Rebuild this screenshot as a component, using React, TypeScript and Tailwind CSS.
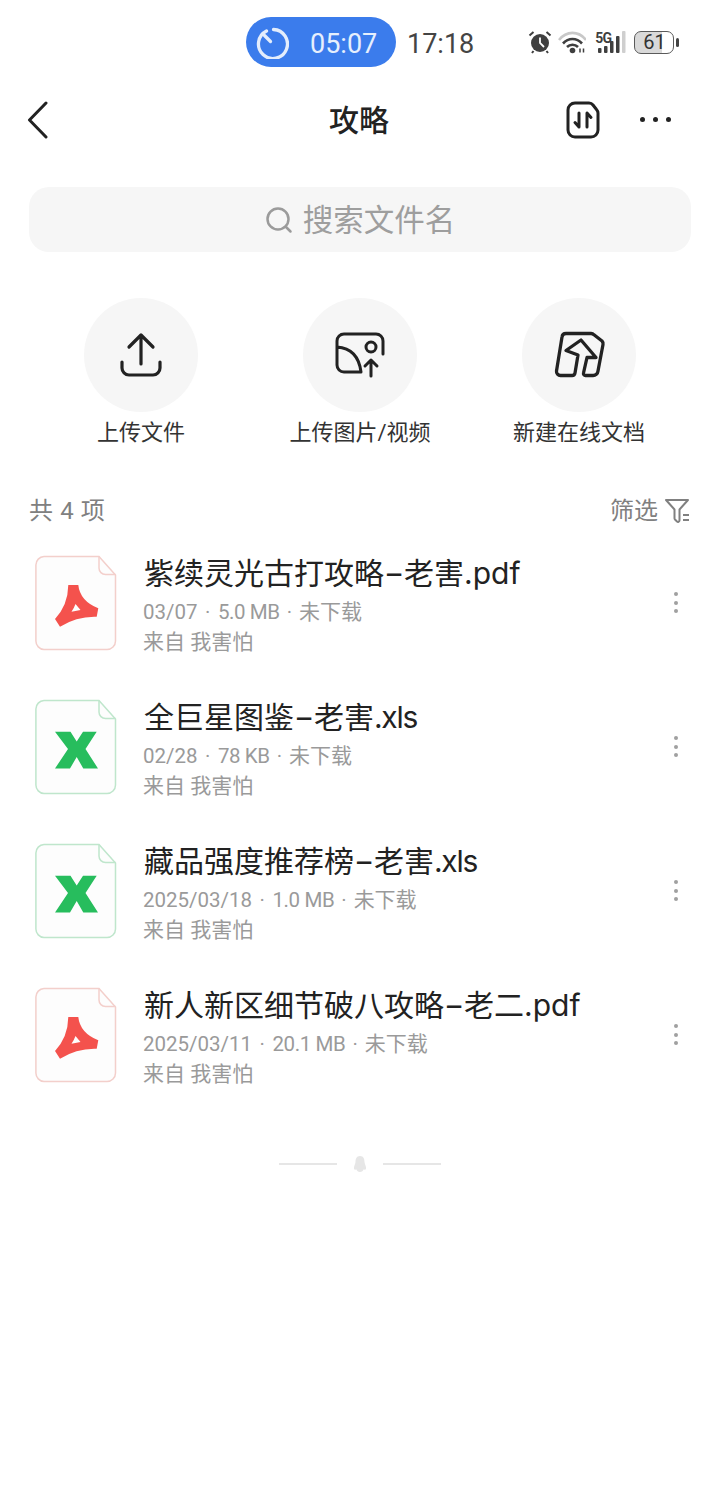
const files = [
  { stem: '紫续灵光古打攻略', author: '老害', ext: '.pdf', meta: ['03/07', '5.0 MB', '未下载'], type: 'pdf' },
  { stem: '全巨星图鉴', author: '老害', ext: '.xls', meta: ['02/28', '78 KB', '未下载'], type: 'xls' },
  { stem: '藏品强度推荐榜', author: '老害', ext: '.xls', meta: ['2025/03/18', '1.0 MB', '未下载'], type: 'xls' },
  { stem: '新人新区细节破八攻略', author: '老二', ext: '.pdf', meta: ['2025/03/11', '20.1 MB', '未下载'], type: 'pdf' },
];

function FileIcon({ type }: { type: string }) {
  const pdf = type === 'pdf';
  const edge = pdf ? '#f3cfcb' : '#bfe6cc';
  return (
    <svg width="82" height="96" viewBox="0 0 82 96" fill="none" className="shrink-0">
      <path d="M9 1.500H64L80.500 20V86A8.500 8.500 0 0 1 72 94.500H9A8.500 8.500 0 0 1 .9 86V10A8.500 8.500 0 0 1 9 1.500Z" fill="#fdfdfd" stroke={edge} strokeWidth="1.500" />
      <path d="M64 1.500V13A6.500 6.500 0 0 0 70.500 19.500H80.500" stroke={edge} strokeWidth="1.500" />
      {pdf ? (
        <path
          fillRule="evenodd"
          fill="#f4524d"
          d="M33.300 30H43.300Q45 46 63.300 53.300L61.700 61.700Q42 61 25 71.700L20 64Q33 50 33.300 30ZM40.500 49L45.500 55 36.500 56.800Q39 53 40.500 49Z"
        />
      ) : (
        <path
          fill="#27bd5d"
          d="M20 32.700H35.500L41.700 42.500 48 32.700H61.700L50.500 50 63 69.500H48.300L41.700 58 35 69.500H20L33 50Z"
        />
      )}
    </svg>
  );
}

function StatusIcons() {
  return (
    <div className="flex items-center ml-[54px] h-[50px]">
      {/* alarm */}
      <svg width="24" height="24" viewBox="0 0 24 24" fill="none">
        <circle cx="12" cy="13" r="9" fill="#3f3f3f" />
        <path d="M12 7.500V13L16 17" stroke="#fff" strokeWidth="1.800" />
        <path d="M1.500 5.500L5.500 2M22.500 5.500L18.500 2M5.500 21L4 23M18.500 21L20 23" stroke="#3f3f3f" strokeWidth="2" />
      </svg>
      {/* wifi */}
      <svg width="28" height="24" viewBox="0 0 28 24" fill="none" className="ml-[6px]">
        <path d="M1 10C8.500 .5 20.500 .5 28 10" stroke="#c8c8c8" strokeWidth="2.600" />
        <path d="M5 13.500C10.500 7.500 18.500 7.500 24 13.500" stroke="#3f3f3f" strokeWidth="2.600" />
        <path d="M9 17C12 14 17 14 20 17" stroke="#3f3f3f" strokeWidth="2.600" />
        <circle cx="14.500" cy="20.500" r="2.800" fill="#3f3f3f" />
        <path d="M22 18.500V22.500M25.500 18.500V22.500" stroke="#3f3f3f" strokeWidth="1.500" />
      </svg>
      {/* 5G + signal */}
      <div className="relative w-[33px] h-[24px] ml-[8px]">
        <span className="absolute left-[1px] top-[1px] text-[14px] leading-[14px] font-bold text-[#3f3f3f] tracking-[-0.8px]">5G</span>
        <svg width="33" height="24" viewBox="0 0 33 24" fill="none" className="absolute left-0 top-0">
          <rect x="4" y="18" width="3.500" height="5" rx="1" fill="#3f3f3f" />
          <rect x="10" y="16" width="3.500" height="7" rx="1" fill="#3f3f3f" />
          <rect x="16" y="11" width="3.500" height="12" rx="1" fill="#3f3f3f" />
          <rect x="22" y="6" width="3.500" height="17" rx="1" fill="#3f3f3f" />
          <rect x="28" y="1" width="3.500" height="22" rx="1" fill="#cfcfcf" />
        </svg>
      </div>
      {/* battery */}
      <div className="ml-[7px] w-[40px] h-[23px] rounded-[7px] border-[1.500px] border-[#5a5a5a] bg-[linear-gradient(90deg,#d9d9d9_72%,#ffffff_72%)] flex items-center pl-[8px] text-[20px] leading-none text-[#333]">
        61
      </div>
      <div className="w-[3px] h-[9px] rounded-full bg-[#444] ml-[2px]" />
    </div>
  );
}

export default function App() {
  return (
    <div className="w-[720px] h-[1485px] bg-white overflow-hidden font-['Roboto','Noto_Sans_CJK_SC',sans-serif]">
      {/* status bar */}
      <div className="flex items-center pl-[246px] pt-[17px]">
        <div className="w-[150px] h-[50px] rounded-full bg-[#3b7cec] flex items-center pl-[9px]">
          <svg width="34" height="34" viewBox="0 -2 34 34" fill="none">
            <path d="M11.500 4A14.500 14.500 0 1 0 18.500 2.500" stroke="#e3edfc" strokeWidth="3.300" strokeLinecap="round" />
            <path d="M9.500 8.500L15.500 14.500" stroke="#e3edfc" strokeWidth="3.300" strokeLinecap="round" />
          </svg>
          <span className="ml-[21px] mt-[4px] text-[27px] leading-none text-[#e6effd]">05:07</span>
        </div>
        <span className="ml-[11px] mt-[4px] text-[27px] leading-none text-[#444]">17:18</span>
        <StatusIcons />
      </div>

      {/* title bar */}
      <div className="relative flex items-center justify-center h-[70px] mt-[18px]">
        <svg width="24" height="38" viewBox="0 0 24 38" fill="none" className="absolute left-[26px] top-[16px]">
          <path d="M20 2L3.500 19L20 36" stroke="#222" strokeWidth="3" strokeLinecap="round" strokeLinejoin="round" />
        </svg>
        <span className="mt-[2px] -ml-[2px] text-[30px] leading-none font-medium text-[#222]">攻略</span>
        <svg width="34" height="38" viewBox="0 0 34 38" fill="none" className="absolute left-[566px] top-[16px]">
          <path d="M9 2H23A5 5 0 0 1 27 4L30.500 8.500A6 6 0 0 1 32 12V29A7 7 0 0 1 25 36H9A7 7 0 0 1 2 29V9A7 7 0 0 1 9 2Z" stroke="#222" strokeWidth="3" />
          <path d="M13 12V26M13 26L9 21.500M21 26V12M21 12L25 16.500" stroke="#222" strokeWidth="3" strokeLinecap="round" strokeLinejoin="round" />
        </svg>
        <div className="absolute left-[640px] top-[32px] flex gap-[8px]">
          <div className="w-[5px] h-[5px] rounded-full bg-[#222]" />
          <div className="w-[5px] h-[5px] rounded-full bg-[#222]" />
          <div className="w-[5px] h-[5px] rounded-full bg-[#222]" />
        </div>
      </div>

      {/* search */}
      <div className="mx-[29px] mt-[32px] h-[65px] rounded-[20px] bg-[#f6f6f6] flex items-center justify-center">
        <svg width="28" height="28" viewBox="0 0 28 28" fill="none">
          <circle cx="13" cy="13" r="10.500" stroke="#9b9b9b" strokeWidth="2.500" />
          <path d="M21 21L25.500 25.500" stroke="#9b9b9b" strokeWidth="2.500" strokeLinecap="round" />
        </svg>
        <span className="ml-[10px] mt-[4px] text-[30.500px] leading-none text-[#9e9e9e]">搜索文件名</span>
      </div>

      {/* actions */}
      <div className="flex justify-center mt-[46px]">
        <div className="w-[219px] flex flex-col items-center">
          <div className="w-[114px] h-[114px] rounded-full bg-[#f6f6f6] flex items-center justify-center">
            <svg width="44" height="46" viewBox="0 0 44 46" fill="none">
              <path d="M22 32V3M22 3L10 15M22 3L34 15M3 30V36A7 7 0 0 0 10 43H34A7 7 0 0 0 41 36V30" stroke="#222" strokeWidth="3.200" strokeLinecap="round" strokeLinejoin="round" />
            </svg>
          </div>
          <span className="mt-[6px] text-[22px] leading-[30px] text-[#333]">上传文件</span>
        </div>
        <div className="w-[219px] flex flex-col items-center">
          <div className="w-[114px] h-[114px] rounded-full bg-[#f6f6f6] flex items-center justify-center">
            <svg width="50" height="46" viewBox="0 0 50 46" fill="none">
              <path d="M48 22V9A7 7 0 0 0 41 2H9A7 7 0 0 0 2 9V33A7 7 0 0 0 9 40H26C24 24 16 16 2 15" stroke="#222" strokeWidth="3" strokeLinecap="round" strokeLinejoin="round" />
              <circle cx="36" cy="15" r="5" stroke="#222" strokeWidth="3" />
              <path d="M36 44V28M36 28L30 34M36 28L42 34" stroke="#222" strokeWidth="3" strokeLinecap="round" strokeLinejoin="round" />
            </svg>
          </div>
          <span className="mt-[6px] text-[22px] leading-[30px] text-[#333]">上传图片/视频</span>
        </div>
        <div className="w-[219px] flex flex-col items-center">
          <div className="w-[114px] h-[114px] rounded-full bg-[#f6f6f6] flex items-center justify-center">
            <svg width="60" height="60" viewBox="-1 -5 60 60" fill="none">
              <path
                d="M16 3.500H41A4 4 0 0 1 44 4.800L52 11C53 12 53.300 13 53 14.500L48 41A5 5 0 0 1 43 45.500H35.500A2 2 0 0 1 33.500 43L37 27.500H46L31 10 16 20.500 28 25 25 43A3 3 0 0 1 22 45.500H10.500A4 4 0 0 1 6.500 41L12 7A4 4 0 0 1 16 3.500Z"
                stroke="#222"
                strokeWidth="3.300"
                strokeLinejoin="round"
              />
            </svg>
          </div>
          <span className="mt-[6px] text-[22px] leading-[30px] text-[#333]">新建在线文档</span>
        </div>
      </div>

      {/* list header */}
      <div className="flex items-center justify-between pl-[29px] pr-[29px] mt-[46px] h-[34px]">
        <span className="text-[24px] leading-none tracking-[0.6px] text-[#808080]">共 4 项</span>
        <div className="flex items-center">
          <span className="-ml-[1px] text-[24px] leading-none text-[#808080]">筛选</span>
          <svg width="27" height="26" viewBox="0 0 27 26" fill="none" className="ml-[6px]">
            <path d="M2 2H24L15.500 11.500V22.500A1.500 1.500 0 0 1 13 23.500L11 21.500A2 2 0 0 1 10.500 20V11.500Z" stroke="#808080" strokeWidth="2" strokeLinejoin="round" />
            <path d="M19 17H25M19 22H25" stroke="#808080" strokeWidth="2" />
          </svg>
        </div>
      </div>

      {/* files */}
      <div className="mt-[25px]">
        {files.map((file) => (
          <div key={file.stem} className="flex items-start h-[144px] pl-[35px]">
            <div className="pt-[2px]">
              <FileIcon type={file.type} />
            </div>
            <div className="ml-[27px] flex-1 flex flex-col">
              <div className="text-[30px] leading-[40px] text-[#222] font-['Inter','Noto_Sans_CJK_SC',sans-serif] whitespace-nowrap">
                {file.stem}
                <span className="inline-block w-[20px] text-center scale-x-150">-</span>
                {file.author}
                <span className={file.type === 'xls' ? 'tracking-[-1.300px]' : ''}>{file.ext}</span>
              </div>
              <div className="-ml-[1px] mt-[4px] flex items-center text-[20.500px] leading-[30px] text-[#9a9a9a]">
                <span>{file.meta[0]}</span>
                <span className="mx-[7.500px]">·</span>
                <span className="tracking-[-0.400px]">{file.meta[1]}</span>
                <span className="mx-[7px]">·</span>
                <span className="text-[21px]">{file.meta[2]}</span>
              </div>
              <span className="-ml-[1px] text-[21px] leading-[30px] text-[#9a9a9a]">来自 我害怕</span>
            </div>
            <div className="w-[8px] mr-[40px] mt-[39px] flex flex-col items-center gap-[4.500px]">
              <div className="w-[4px] h-[4px] rounded-full bg-[#a0a0a0]" />
              <div className="w-[4px] h-[4px] rounded-full bg-[#a0a0a0]" />
              <div className="w-[4px] h-[4px] rounded-full bg-[#a0a0a0]" />
            </div>
          </div>
        ))}
      </div>

      {/* end of list */}
      <div className="flex items-center justify-center mt-[26px]">
        <div className="w-[58px] h-[2px] bg-[#e6e6e6]" />
        <svg width="14" height="18" viewBox="0 0 14 18" fill="none" className="mx-[16px]">
          <path d="M7 1C10.500 1 11.500 4 11.500 7C11.500 9 13.500 11 13 14C12.500 15 11 14.500 10.500 14.500C10 16 9 17 7 17C5 17 4 16 3.500 14.500C3 14.500 1.500 15 1 14C.5 11 2.500 9 2.500 7C2.500 4 3.500 1 7 1Z" fill="#e6e6e6" />
        </svg>
        <div className="w-[58px] h-[2px] bg-[#e6e6e6]" />
      </div>
    </div>
  );
}
